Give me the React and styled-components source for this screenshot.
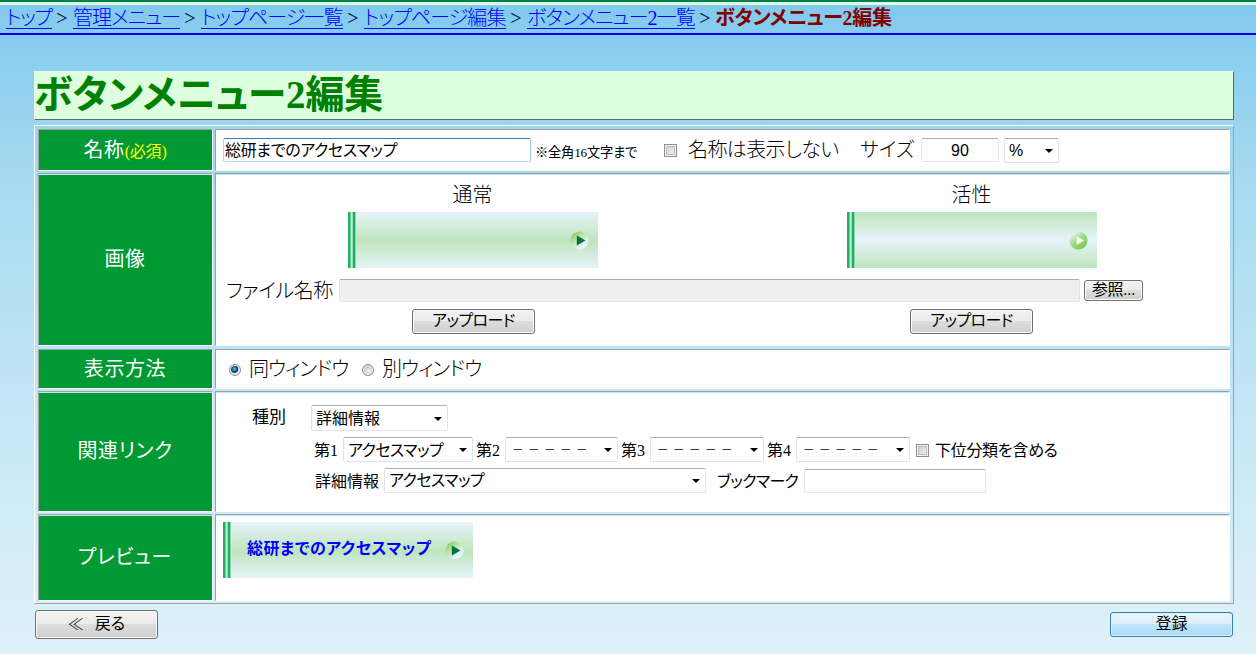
import styled, { createGlobalStyle, css } from 'styled-components';

const serif = '"Liberation Serif", "Noto Sans CJK JP", serif';
const sans = '"Liberation Sans", "Noto Sans CJK JP", sans-serif';

const crumbs = [
    { text: 'トップ', w: 46, ls: -1.3 },
    { text: '管理メニュー', w: 107, ls: -0.9 },
    { text: 'トップページ一覧', w: 142, ls: -0.9 },
    { text: 'トップページ編集', w: 142, ls: -0.9 },
    { text: 'ボタンメニュー2一覧', w: 168, ls: -0.85 },
];

const DropDown = ({ w, h = 25, mr, down, dash, ls, children }) => (
    <SelectBox $w={w} $h={h} $mr={mr}>
        <Select $h={h} $down={down} $dash={dash} $ls={ls}>
            <option>{children}</option>
        </Select>
        <Arrow viewBox="0 0 8 4">
            <path d="M0 0h8L4 4z" fill="#000" />
        </Arrow>
    </SelectBox>
);

const MenuButton = ({ active, children }) => (
    <MenuImage $active={active}>
        <MenuText>{children}</MenuText>
        <Ball viewBox="0 0 20 20">
            <defs>
                <linearGradient id={active ? 'ballOn' : 'ballOff'} x1="0.15" y1="0.1" x2="0.7" y2="0.8">
                    <stop offset="0" stopColor={active ? '#e8f6f4' : '#86d25c'} />
                    <stop offset="0.5" stopColor={active ? '#a5dc90' : '#c2e6b8'} />
                    <stop offset="1" stopColor={active ? '#80d058' : '#e6f4fa'} />
                </linearGradient>
            </defs>
            <circle cx="10" cy="10" r="9.5" fill={`url(#${active ? 'ballOn' : 'ballOff'})`} />
            <path
                d={active ? 'M8 5.5v9l8-4.5z' : 'M7.2 4.8v10.4l9-5.2z'}
                fill={active ? '#fff' : '#04703c'}
            />
        </Ball>
    </MenuImage>
);

const App = () => {
    return (
        <>
            <GlobalStyle />
            <TopBar>
                {crumbs.map((c) => (
                    <Crumb key={c.text}>
                        <CrumbLink $w={c.w} $ls={c.ls}>{c.text}</CrumbLink>
                        <Gt>&gt;</Gt>
                    </Crumb>
                ))}
                <Current>ボタンメニュー2編集</Current>
            </TopBar>
            <Main>
                <Title>ボタンメニュー2編集</Title>
                <Table>
                    <Row $h={42}>
                        <Head>
                            名称<Must>(必須)</Must>
                        </Head>
                        <Cell>
                            <Line $h={24} $mt={8} $ml={7}>
                                <Input $w={308} $ls={-0.35} $focus defaultValue="総研までのアクセスマップ" />
                                <Text $size={13.3} $w={102} $ml={4} $ls={-0.25} $down={5}>※全角16文字まで</Text>
                                <Check $ml={27} />
                                <Text $w={151} $ml={11} $ls={-0.6}>名称は表示しない</Text>
                                <Text $w={54} $ml={21}>サイズ</Text>
                                <Input $w={78} $ml={7} $center defaultValue="90" />
                                <Gap $w={5} />
                                <DropDown w={55}>%</DropDown>
                            </Line>
                        </Cell>
                    </Row>
                    <Row $h={173} $mt={2} $edge>
                        <Head>画像</Head>
                        <Cell>
                            <Halves>
                                <Half>
                                    <Text $down={1}>通常</Text>
                                    <MenuButton />
                                </Half>
                                <Half>
                                    <Text $down={1}>活性</Text>
                                    <MenuButton active />
                                </Half>
                            </Halves>
                            <Line $h={23} $mt={11} $ml={10}>
                                <Text $w={107} $ls={-0.4}>ファイル名称</Text>
                                <FileBox />
                                <Button $w={59} $h={21} $ls={-0.5}>参照...</Button>
                            </Line>
                            <Halves $mt={7} $cols="501px 495px">
                                <Half>
                                    <Button $w={123} $h={25} $ls={-0.6}>アップロード</Button>
                                </Half>
                                <Half>
                                    <Button $w={123} $h={25} $ls={-0.6}>アップロード</Button>
                                </Half>
                            </Halves>
                        </Cell>
                    </Row>
                    <Row $h={40} $mt={3}>
                        <Head>表示方法</Head>
                        <Cell>
                            <Line $h={24} $mt={7} $ml={13}>
                                <Radio $on />
                                <Text $w={99} $ml={8} $ls={-1}>同ウィンドウ</Text>
                                <Radio $ml={14} />
                                <Text $w={99} $ml={8} $ls={-1}>別ウィンドウ</Text>
                            </Line>
                        </Cell>
                    </Row>
                    <Row $h={121} $mt={2} $edge>
                        <Head>関連リンク</Head>
                        <Cell>
                            <Line $h={26} $mt={13} $ml={36}>
                                <Text $size={17} $w={59}>種別</Text>
                                <DropDown w={137} h={26}>詳細情報</DropDown>
                            </Line>
                            <Line $h={25} $mt={6} $ml={98}>
                                <Text $size={16} $w={29} $down={3}>第1</Text>
                                <DropDown w={130} mr={3} down={1} ls={-0.6}>アクセスマップ</DropDown>
                                <Text $size={16} $w={29} $down={3}>第2</Text>
                                <DropDown w={113} mr={3} down={1} dash>－－－－－</DropDown>
                                <Text $size={16} $w={29} $down={3}>第3</Text>
                                <DropDown w={114} mr={3} down={1} dash>－－－－－</DropDown>
                                <Text $size={16} $w={29} $down={3}>第4</Text>
                                <DropDown w={114} mr={6} down={1} dash>－－－－－</DropDown>
                                <Check />
                                <Text $size={16} $w={123} $ml={6} $ls={-0.3} $down={3}>下位分類を含める</Text>
                            </Line>
                            <Line $h={25} $mt={6} $ml={99}>
                                <Text $size={16} $w={69} $down={3}>詳細情報</Text>
                                <DropDown w={322} mr={11} ls={-0.6}>アクセスマップ</DropDown>
                                <Text $size={16} $w={82} $ls={-0.7} $down={3}>ブックマーク</Text>
                                <Input $w={182} $ml={5} />
                            </Line>
                        </Cell>
                    </Row>
                    <Row $h={87} $mt={2} $edge>
                        <Head>プレビュー</Head>
                        <Cell>
                            <Line $h={56} $mt={7} $ml={7}>
                                <MenuButton>総研までのアクセスマップ</MenuButton>
                            </Line>
                        </Cell>
                    </Row>
                </Table>
                <Footer>
                    <Button $w={123} $h={29}>
                        <Back>≪</Back>戻る
                    </Button>
                    <Button $w={123} $h={25} $primary>登録</Button>
                </Footer>
            </Main>
        </>
    );
};

const GlobalStyle = createGlobalStyle`
* { box-sizing: border-box; }
body {
    margin: 0;
    height: 654px;
    overflow: hidden;
    font-family: ${serif};
    font-feature-settings: "palt";
    font-size: 20px;
    color: #000;
    background: linear-gradient(#80c9ee 0, #8ed0ef 70px, #a7daf0 180px, #c2e6f5 400px, #daeffa 600px, #dff1f9 654px);
}
input, select, button {
    font-feature-settings: "palt";
    margin: 0;
}
`;

const TopBar = styled.nav`
display: flex;
height: 35px;
padding: 2px 0 0 6px;
border-top: 2px solid #008050;
border-bottom: 2px solid #00f;
background: linear-gradient(#ddffdd 0 3px, transparent 3px);
line-height: 28px;
white-space: nowrap;
`;

const Crumb = styled.span`
display: flex;
`;

const CrumbLink = styled.a`
width: ${(p) => p.$w}px;
height: 25px;
font-weight: 300;
letter-spacing: ${(p) => p.$ls}px;
color: #00f;
border-bottom: 1px solid #00f;
`;

const Gt = styled.span`
width: 21px;
padding-right: 1px;
text-align: center;
color: #003;
`;

const Current = styled.b`
color: #800000;
margin-left: -1px;
letter-spacing: -0.3px;
`;

const Main = styled.main`
padding: 36px 22px 0 34px;
`;

const Title = styled.h1`
height: 49px;
margin: 0 0 5px;
border: 1px solid #e8f8e8;
border-right-color: #666;
border-bottom-color: #666;
background: #ddffdd;
color: #008000;
font-size: 39px;
letter-spacing: -0.1px;
line-height: 45px;
text-indent: -1px;
white-space: nowrap;
`;

const Table = styled.div`
height: 479px;
padding: 3px;
border: 1px solid #fff;
border-right-color: #a0a0a0;
border-bottom-color: #a0a0a0;
`;

const Row = styled.div`
display: grid;
grid-template-columns: 175px 1fr;
column-gap: 2px;
height: ${(p) => p.$h}px;
margin-top: ${(p) => p.$mt || 0}px;
& > div {
    border: 1px solid #a0a0a0;
    border-right-color: #fff;
    border-bottom-color: #fff;
    ${(p) => p.$edge && css`box-shadow: inset 0 1px #c4e7f5;`}
}
`;

const Head = styled.div`
display: flex;
align-items: center;
justify-content: center;
padding: 0 1px 4px 0;
background: #009933;
color: #fff;
letter-spacing: 0.6px;
`;

const Must = styled.span`
color: #ff0;
font-size: 16px;
letter-spacing: -0.2px;
padding-top: 3px;
`;

const Cell = styled.div`
min-width: 0;
background: #fff;
`;

const Line = styled.div`
display: flex;
align-items: center;
height: ${(p) => p.$h}px;
margin: ${(p) => p.$mt}px 0 0 ${(p) => p.$ml}px;
`;

const Gap = styled.i`
width: ${(p) => p.$w}px;
`;

const Text = styled.span`
flex: none;
width: ${(p) => (p.$w ? p.$w + 'px' : 'auto')};
height: 24px;
margin-left: ${(p) => p.$ml || 0}px;
margin-top: ${(p) => p.$down || 0}px;
font-size: ${(p) => p.$size || 20}px;
font-weight: ${(p) => (p.$size ? 400 : 300)};
letter-spacing: ${(p) => p.$ls || 0}px;
line-height: 24px;
white-space: nowrap;
`;

const field = css`
border: 1px solid #e2e3ea;
border-top-color: #abadb3;
border-radius: 2px;
background: #fff;
font-family: ${sans};
font-size: 16px;
color: #000;
outline: none;
`;

const Input = styled.input`
${field}
flex: none;
width: ${(p) => p.$w}px;
height: 24px;
margin-left: ${(p) => p.$ml || 0}px;
padding: 0 1px 2px;
letter-spacing: ${(p) => p.$ls || 0}px;
${(p) => p.$center && css`text-align: center; padding: 1px 0 0;`}
${(p) => p.$focus && css`border-color: #3d7bad #a4c9e3 #b7d9ed #b5cfe7;`}
`;

const SelectBox = styled.span`
display: grid;
flex: none;
align-items: center;
width: ${(p) => p.$w}px;
height: ${(p) => p.$h}px;
margin-right: ${(p) => p.$mr || 0}px;
& > * { grid-area: 1 / 1; }
`;

const Select = styled.select`
${field}
appearance: none;
width: 100%;
height: ${(p) => p.$h}px;
padding: ${(p) => p.$down || 0}px 0 0 4px;
letter-spacing: ${(p) => p.$ls || 0}px;
${(p) => p.$dash && css`
font-size: 11.5px;
letter-spacing: 4.5px;
padding-left: 6px;
font-feature-settings: normal;
`}
`;

const Arrow = styled.svg`
justify-self: end;
width: 8px;
height: 4px;
margin-right: 6px;
margin-top: 1px;
`;

const Check = styled.i`
flex: none;
width: 13px;
height: 13px;
margin-left: ${(p) => p.$ml || 0}px;
margin-top: 1px;
border: 1px solid #8e8f8f;
background: linear-gradient(135deg, #c8ccd2, #f6f6f6);
box-shadow: inset 0 0 0 1px #f4f4f4, inset 0 0 0 2px #b8bcc2;
`;

const Radio = styled.i`
flex: none;
width: 12px;
height: 12px;
margin-left: ${(p) => p.$ml || 0}px;
margin-top: 2px;
border: 1px solid #8e8f8f;
border-radius: 50%;
box-shadow: inset 0 0 0 1px #f4f4f4;
background: ${(p) => (p.$on
    ? 'radial-gradient(circle at 45% 40%, #5fc8f0 0, #1670a8 2px, #12304f 3.5px, #dde 4.2px)'
    : 'radial-gradient(circle at 60% 60%, #f4f4f4 0, #c4c6c8 5px)')};
`;

const FileBox = styled.div`
${field}
flex: none;
width: 741px;
height: 23px;
margin: 0 4px 0 6px;
background: #efefef;
`;

const Button = styled.button`
display: flex;
align-items: center;
justify-content: center;
flex: none;
width: ${(p) => p.$w}px;
height: ${(p) => p.$h}px;
padding: 0 0 5px;
border: 1px solid ${(p) => (p.$primary ? '#3c7fb1' : '#707070')};
border-radius: 3px;
box-shadow: inset 0 0 0 1px ${(p) => (p.$primary ? '#d8f2fc' : '#fafafa')};
background: ${(p) => (p.$primary
    ? 'linear-gradient(#eaf6fd 0, #d9f0fc 48%, #bee6fd 50%, #a7d9f5 100%)'
    : 'linear-gradient(#f2f2f2 0, #ebebeb 48%, #dddddd 50%, #cfcfcf 100%)')};
font-family: ${sans};
font-size: 16px;
letter-spacing: ${(p) => p.$ls || 0}px;
color: #000;
white-space: nowrap;
`;

const Back = styled.span`
margin-right: 11px;
padding-top: 2px;
font-weight: 300;
`;

const Halves = styled.div`
display: grid;
grid-template-columns: ${(p) => p.$cols || '499px 499px'};
margin: ${(p) => p.$mt || 8}px 0 0 7px;
`;

const Half = styled.div`
display: flex;
flex-direction: column;
align-items: center;
gap: 5px;
`;

const MenuImage = styled.div`
display: flex;
align-items: center;
justify-content: space-between;
width: 250px;
height: 56px;
padding: 0 9px 0 24px;
background:
    linear-gradient(90deg, #19b06b 0 2px, #70cc98 2px 3px, #c8eac4 3px 4px, #a0dcaa 4px 5px, #19b06b 5px 7px, #8fd6ae 7px 8px, transparent 8px),
    ${(p) => (p.$active
    ? 'linear-gradient(#bfe5bc, #e6f3fb 50%, #bfe5bc)'
    : 'linear-gradient(#e6f3fb, #bfe5bc 52%, #e6f3fb)')};
`;

const MenuText = styled.b`
color: #00f;
font-size: 16px;
letter-spacing: 0.5px;
line-height: 24px;
padding-bottom: 2px;
white-space: nowrap;
`;

const Ball = styled.svg`
width: 19px;
height: 19px;
`;

const Footer = styled.div`
display: flex;
align-items: flex-start;
justify-content: space-between;
margin-top: 6px;
padding: 0 1px;
& > :last-child { margin-top: 2px; }
`;

export default App;
